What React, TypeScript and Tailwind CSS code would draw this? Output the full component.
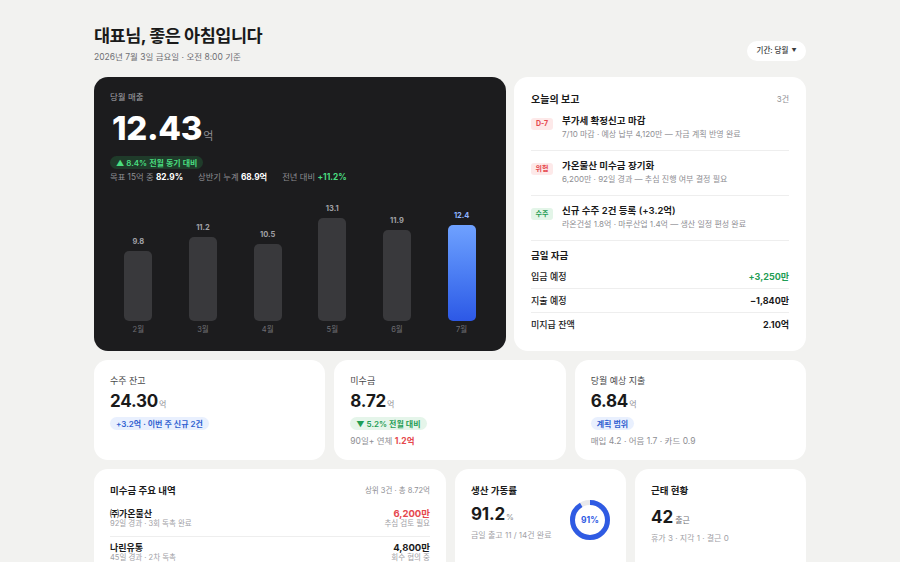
import React from "react";

const FONT = { fontFamily: "Inter, 'Noto Sans CJK KR', 'Noto Sans', sans-serif" };

const bars = [
  { m: "2월", v: "9.8", h: 70 },
  { m: "3월", v: "11.2", h: 84 },
  { m: "4월", v: "10.5", h: 77 },
  { m: "5월", v: "13.1", h: 103 },
  { m: "6월", v: "11.9", h: 91 },
  { m: "7월", v: "12.4", h: 96, active: true },
];

const reports = [
  { badge: "D-7", tone: "red", title: "부가세 확정신고 마감", sub: "7/10 마감 · 예상 납부 4,120만 — 자금 계획 반영 완료" },
  { badge: "위험", tone: "red", title: "가온물산 미수금 장기화", sub: "6,200만 · 92일 경과 — 추심 진행 여부 결정 필요" },
  { badge: "수주", tone: "green", title: "신규 수주 2건 등록 (+3.2억)", sub: "라온건설 1.8억 · 마루산업 1.4억 — 생산 일정 편성 완료" },
];

function Donut() {
  const r = 17.5;
  const c = 2 * Math.PI * r;
  return (
    <div className="relative w-[42px] h-[42px]">
      <svg width="42" height="42" viewBox="0 0 42 42">
        <circle cx="21" cy="21" r={r} fill="none" stroke="#e9e9eb" strokeWidth="5" />
        <circle
          cx="21"
          cy="21"
          r={r}
          fill="none"
          stroke="#2f5be3"
          strokeWidth="5"
          strokeDasharray={`${c * 0.91} ${c}`}
          transform="rotate(-90 21 21)"
        />
      </svg>
      <div className="absolute inset-0 flex items-center justify-center text-[8.5px] font-bold text-[#2f5be3]">91%</div>
    </div>
  );
}

export default function App() {
  return (
    <div className="w-full h-[562px] overflow-hidden bg-[#f2f2f0] text-[#1a1a1a]" style={FONT}>
      <div className="px-[94px] pt-[22px]">
        {/* Header */}
        <div className="flex justify-between items-end mb-[13px]">
          <div>
            <div className="text-[17.5px] leading-[28px] font-bold tracking-[-0.5px]">대표님, 좋은 아침입니다</div>
            <div className="text-[8.5px] leading-[14px] text-[#6e6e73]">2026년 7월 3일 금요일 · 오전 8:00 기준</div>
          </div>
          <div className="mb-[3px] h-[20px] w-[59px] justify-center rounded-full bg-white flex items-center text-[7.5px] text-[#3a3a3c] font-medium">
            기간: 당월 <span className="ml-[3px] text-[5px]">▼</span>
          </div>
        </div>

        {/* Row 1 */}
        <div className="grid grid-cols-[412px_1fr] gap-[8px] h-[274px]">
          <div className="rounded-[14px] bg-[#1c1c1e] px-4 pt-[13px] pb-[15px] flex flex-col">
            <div className="text-[8.5px] leading-[14px] text-[#a1a1a6]">당월 매출</div>
            <div className="mt-[6px] flex items-baseline leading-[36px] pl-[2px]">
              <span className="text-[33px] font-extrabold text-white tracking-[-0.3px]">12.43</span>
              <span className="ml-[1px] text-[11px] text-[#8e8e93]">억</span>
            </div>
            <div className="mt-[2px] w-fit h-[13px] px-[6px] rounded-full bg-[#1f3b2a] flex items-center text-[8px] font-semibold text-[#4ade80]">
              ▲ 8.4% 전월 동기 대비
            </div>
            <div className="mt-[2px] flex gap-[15px] text-[8.3px] leading-[12px] text-[#8e8e93]">
              <span>목표 15억 중 <b className="text-white font-bold">82.9%</b></span>
              <span>상반기 누계 <b className="text-white font-bold">68.9억</b></span>
              <span>전년 대비 <b className="text-[#4ade80] font-bold">+11.2%</b></span>
            </div>
            <div className="flex-1 mx-[-4px] grid grid-cols-6 items-end">
              {bars.map((b) => (
                <div key={b.m} className="flex flex-col items-center">
                  <div className={`text-[7.5px] leading-[10px] font-bold mb-[4px] ${b.active ? "text-[#8fb4ff]" : "text-[#a1a1a6]"}`}>{b.v}</div>
                  <div
                    className={`w-[28px] rounded-[5px] ${b.active ? "bg-gradient-to-b from-[#6fa1ff] to-[#2d58e6]" : "bg-[#39393c]"}`}
                    style={{ height: b.h }}
                  />
                  <div className="mt-[3px] text-[7.5px] leading-[12px] text-[#6e6e73]">{b.m}</div>
                </div>
              ))}
            </div>
          </div>

          <div className="rounded-[14px] bg-white px-[17px] pt-[15px]">
            <div className="flex justify-between items-center leading-[14px]">
              <span className="text-[10px] font-bold">오늘의 보고</span>
              <span className="text-[8px] text-[#8e8e93]">3건</span>
            </div>
            {reports.map((r) => (
              <div key={r.title} className="flex items-start pt-[8px] pb-[9px] border-b border-[#eeeeee]">
                <div
                  className={`mt-[4px] w-[22px] h-[12px] rounded-[3px] flex items-center justify-center text-[7px] font-bold ${
                    r.tone === "red" ? "bg-[#fde9e9] text-[#e5484d]" : "bg-[#e3f5e8] text-[#1f9d55]"
                  }`}
                >
                  {r.badge}
                </div>
                <div className="ml-[9px]">
                  <div className="text-[9.5px] leading-[14px] font-semibold">{r.title}</div>
                  <div className="text-[8px] leading-[13px] text-[#8e8e93]">{r.sub}</div>
                </div>
              </div>
            ))}
            <div className="pt-[8px] text-[9.5px] leading-[14px] font-bold">금일 자금</div>
            <div className="mt-[2px]">
              <div className="h-[24px] flex justify-between items-center border-b border-[#eeeeee] text-[9px]">
                <span className="font-medium">입금 예정</span>
                <span className="font-bold text-[#1f9d55]">+3,250만</span>
              </div>
              <div className="h-[24px] flex justify-between items-center border-b border-[#eeeeee] text-[9px]">
                <span className="font-medium">지출 예정</span>
                <span className="font-bold">−1,840만</span>
              </div>
              <div className="h-[24px] flex justify-between items-center text-[9px]">
                <span className="font-medium">미지급 잔액</span>
                <span className="font-bold">2.10억</span>
              </div>
            </div>
          </div>
        </div>

        {/* Row 2 */}
        <div className="mt-[9px] grid grid-cols-3 gap-[9px] h-[100px]">
          <div className="rounded-[14px] bg-white px-4 pt-[14px]">
            <div className="text-[9px] leading-[14px] text-[#48484a]">수주 잔고</div>
            <div className="mt-[1px] flex items-baseline leading-[24px]">
              <span className="text-[17px] font-bold tracking-[-0.2px]">24.30</span>
              <span className="ml-[1px] text-[8px] text-[#8e8e93]">억</span>
            </div>
            <div className="mt-[1px] w-fit flex h-[13px] px-[6px] rounded-full bg-[#e9f0fe] items-center text-[8px] font-semibold text-[#2f5fd0]">
              +3.2억 · 이번 주 신규 2건
            </div>
          </div>
          <div className="rounded-[14px] bg-white px-4 pt-[14px]">
            <div className="text-[9px] leading-[14px] text-[#48484a]">미수금</div>
            <div className="mt-[1px] flex items-baseline leading-[24px]">
              <span className="text-[17px] font-bold tracking-[-0.2px]">8.72</span>
              <span className="ml-[1px] text-[8px] text-[#8e8e93]">억</span>
            </div>
            <div className="mt-[1px] w-fit flex h-[13px] px-[6px] rounded-full bg-[#e5f5ea] items-center text-[8px] font-semibold text-[#1f9d55]">
              ▼ 5.2% 전월 대비
            </div>
            <div className="mt-[5px] text-[8.5px] leading-[12px] text-[#8e8e93]">
              90일+ 연체 <b className="text-[#e5484d] font-bold">1.2억</b>
            </div>
          </div>
          <div className="rounded-[14px] bg-white px-4 pt-[14px]">
            <div className="text-[9px] leading-[14px] text-[#48484a]">당월 예상 지출</div>
            <div className="mt-[1px] flex items-baseline leading-[24px]">
              <span className="text-[17px] font-bold tracking-[-0.2px]">6.84</span>
              <span className="ml-[1px] text-[8px] text-[#8e8e93]">억</span>
            </div>
            <div className="mt-[1px] w-fit flex h-[13px] px-[6px] rounded-full bg-[#e9f0fe] items-center text-[8px] font-semibold text-[#2f5fd0]">
              계획 범위
            </div>
            <div className="mt-[5px] text-[8.5px] leading-[12px] text-[#8e8e93]">매입 4.2 · 어음 1.7 · 카드 0.9</div>
          </div>
        </div>

        {/* Row 3 */}
        <div className="mt-[9px] grid grid-cols-[1fr_171px_171px] gap-[9px] h-[120px]">
          <div className="rounded-[14px] bg-white px-4 pt-[15px]">
            <div className="flex justify-between items-center leading-[14px]">
              <span className="text-[9.5px] font-bold">미수금 주요 내역</span>
              <span className="text-[7.5px] text-[#8e8e93]">상위 3건 · 총 8.72억</span>
            </div>
            <div className="mt-[2px]">
              <div className="flex justify-between pt-[8px] pb-[7px] border-b border-[#eeeeee]">
                <div>
                  <div className="text-[9px] leading-[11px] font-semibold">㈜가온물산</div>
                  <div className="text-[7.5px] leading-[10px] text-[#a1a1a6]">92일 경과 · 3회 독촉 완료</div>
                </div>
                <div className="text-right">
                  <div className="text-[9.5px] leading-[11px] font-bold text-[#e5484d]">6,200만</div>
                  <div className="text-[7.5px] leading-[10px] text-[#a1a1a6]">추심 검토 필요</div>
                </div>
              </div>
              <div className="flex justify-between pt-[5px] pb-[7px]">
                <div>
                  <div className="text-[9px] leading-[11px] font-semibold">나린유통</div>
                  <div className="text-[7.5px] leading-[10px] text-[#a1a1a6]">45일 경과 · 2차 독촉</div>
                </div>
                <div className="text-right">
                  <div className="text-[9.5px] leading-[11px] font-bold">4,800만</div>
                  <div className="text-[7.5px] leading-[10px] text-[#a1a1a6]">회수 협의 중</div>
                </div>
              </div>
            </div>
          </div>

          <div className="rounded-[14px] bg-white pl-4 pr-[15px] pt-[15px]">
            <div className="text-[9.5px] leading-[14px] font-bold">생산 가동률</div>
            <div className="mt-[1px] flex justify-between items-end">
              <div>
                <div className="flex items-baseline leading-[22px]">
                  <span className="text-[17px] font-bold tracking-[-0.2px]">91.2</span>
                  <span className="ml-[1px] text-[8px] text-[#8e8e93]">%</span>
                </div>
                <div className="mt-[1px] text-[8px] leading-[12px] text-[#a1a1a6]">금일 출고 11 / 14건 완료</div>
              </div>
              <Donut />
            </div>
          </div>

          <div className="rounded-[14px] bg-white px-4 pt-[15px]">
            <div className="text-[9.5px] leading-[14px] font-bold">근태 현황</div>
            <div className="mt-[8px] flex items-baseline leading-[22px]">
              <span className="text-[17px] font-bold">42</span>
              <span className="ml-[2px] text-[8px] text-[#6e6e73]">출근</span>
            </div>
            <div className="mt-[1px] text-[8px] leading-[12px] text-[#a1a1a6]">휴가 3 · 지각 1 · 결근 0</div>
          </div>
        </div>
      </div>
    </div>
  );
}
